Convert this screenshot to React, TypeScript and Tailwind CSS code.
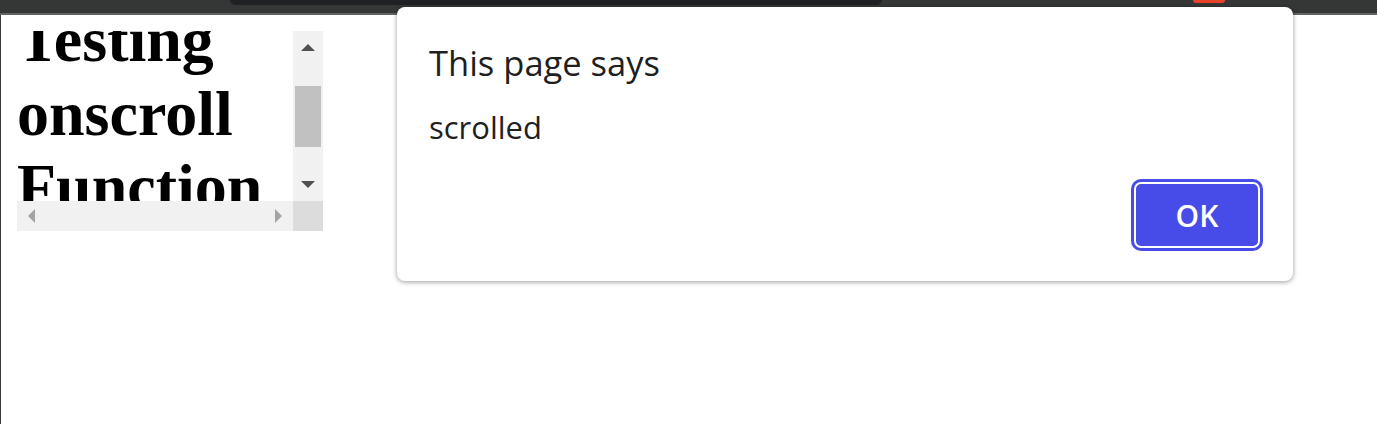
import { useEffect, useRef } from 'react';

function ScrollArrow({ dir, light }: { dir: 'up' | 'down' | 'left' | 'right'; light?: boolean }) {
  const fill = light ? '#a3a3a3' : '#505050';
  const pts = {
    up: '0,7 7,0 14,7',
    down: '0,0 14,0 7,7',
    left: '7,0 7,14 0,7',
    right: '0,0 0,14 7,7',
  }[dir];
  const vertical = dir === 'up' || dir === 'down';
  return (
    <svg width={vertical ? 14 : 7} height={vertical ? 7 : 14} viewBox={vertical ? '0 0 14 7' : '0 0 7 14'}>
      <polygon points={pts} fill={fill} />
    </svg>
  );
}

function ScrollBox() {
  return (
    <div className="grid w-[306px] grid-cols-[276px_30px] grid-rows-[170px_30px]">
      {/* Content, scrolled down */}
      <div className="overflow-hidden">
        <h1 className="mt-[-28px] font-['Liberation_Serif',serif] text-[64px] font-bold leading-[73.6px] text-black">
          Testing onscroll Function
        </h1>
      </div>

      {/* Vertical scrollbar */}
      <div className="flex flex-col items-center bg-[#f1f1f1]">
        <div className="flex h-[32px] items-center justify-center pt-[1px]">
          <ScrollArrow dir="up" />
        </div>
        <div className="mt-[23px] h-[61px] w-[26px] bg-[#c1c1c1]" />
        <div className="mt-auto flex h-[32px] items-center justify-center pb-[2px]">
          <ScrollArrow dir="down" />
        </div>
      </div>

      {/* Horizontal scrollbar */}
      <div className="flex items-center justify-between bg-[#f1f1f1] px-[11px]">
        <ScrollArrow dir="left" light />
        <ScrollArrow dir="right" light />
      </div>
      <div className="bg-[#dcdcdc]" />
    </div>
  );
}

function AlertDialog() {
  const okRef = useRef<HTMLDivElement>(null);
  useEffect(() => {
    okRef.current?.focus();
  }, []);

  return (
    <div className="absolute left-[397px] top-[7px] flex h-[274px] w-[896px] flex-col rounded-[8px] bg-white pb-[30px] pl-[32px] pr-[30px] pt-[36px] font-['Open_Sans',sans-serif] text-[#1f1f1f] shadow-[0_1px_5px_rgba(0,0,0,0.4)]">
      <div className="text-[34.5px] leading-[40px]">This page says</div>
      <div className="mt-[26px] text-[31px] leading-[36px]">scrolled</div>

      <div className="mt-auto flex justify-end">
        <div
          ref={okRef}
          tabIndex={0}
          className="h-[72px] w-[132px] rounded-[10px] bg-[#474ce9] p-[3px] outline-none"
        >
          <div className="flex h-full w-full items-center justify-center rounded-[7px] border-2 border-white text-[30px] font-semibold text-white">
            OK
          </div>
        </div>
      </div>
    </div>
  );
}

export default function App() {
  return (
    <div className="relative h-[424px] w-[1377px] overflow-hidden bg-white">
      {/* Browser chrome strip */}
      <div className="relative h-[13px] bg-[#353636]">
        <div className="absolute left-[230px] top-0 h-[5px] w-[652px] rounded-b-[6px] bg-[#202124]" />
        <div className="absolute left-[1193px] top-0 h-[3px] w-[32px] rounded-b-[3px] bg-[#e8412c]" />
      </div>
      <div className="h-[2px] bg-[#626262]" />

      {/* Page */}
      <div className="h-[409px] border-l border-[#3a3a3a] px-[16px] pt-[16px]">
        <ScrollBox />
      </div>

      <AlertDialog />
    </div>
  );
}
